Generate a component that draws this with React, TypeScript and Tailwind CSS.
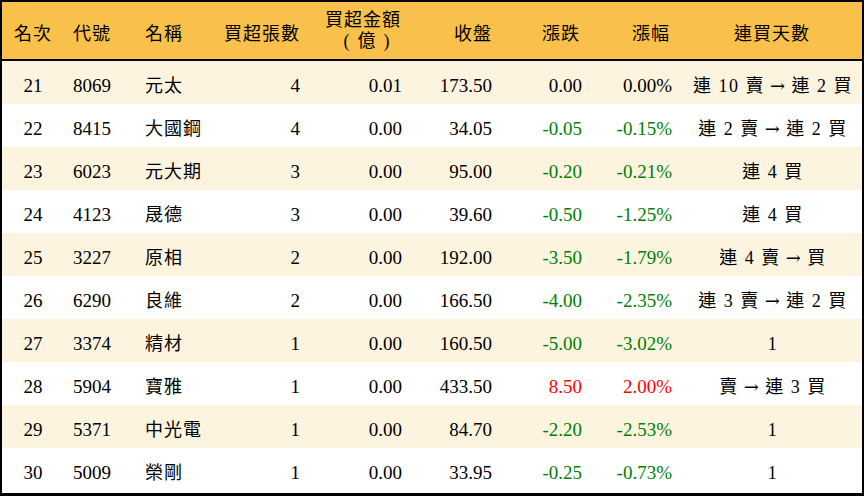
const rows = [
  { rank: 21, code: "8069", name: "元太", qty: 4, amt: "0.01", close: "173.50", chg: "0.00", pct: "0.00%", streak: ["連 10 賣", "連 2 買"], dir: 0 },
  { rank: 22, code: "8415", name: "大國鋼", qty: 4, amt: "0.00", close: "34.05", chg: "-0.05", pct: "-0.15%", streak: ["連 2 賣", "連 2 買"], dir: -1 },
  { rank: 23, code: "6023", name: "元大期", qty: 3, amt: "0.00", close: "95.00", chg: "-0.20", pct: "-0.21%", streak: ["連 4 買"], dir: -1 },
  { rank: 24, code: "4123", name: "晟德", qty: 3, amt: "0.00", close: "39.60", chg: "-0.50", pct: "-1.25%", streak: ["連 4 買"], dir: -1 },
  { rank: 25, code: "3227", name: "原相", qty: 2, amt: "0.00", close: "192.00", chg: "-3.50", pct: "-1.79%", streak: ["連 4 賣", "買"], dir: -1 },
  { rank: 26, code: "6290", name: "良維", qty: 2, amt: "0.00", close: "166.50", chg: "-4.00", pct: "-2.35%", streak: ["連 3 賣", "連 2 買"], dir: -1 },
  { rank: 27, code: "3374", name: "精材", qty: 1, amt: "0.00", close: "160.50", chg: "-5.00", pct: "-3.02%", streak: ["1"], dir: -1 },
  { rank: 28, code: "5904", name: "寶雅", qty: 1, amt: "0.00", close: "433.50", chg: "8.50", pct: "2.00%", streak: ["賣", "連 3 買"], dir: 1 },
  { rank: 29, code: "5371", name: "中光電", qty: 1, amt: "0.00", close: "84.70", chg: "-2.20", pct: "-2.53%", streak: ["1"], dir: -1 },
  { rank: 30, code: "5009", name: "榮剛", qty: 1, amt: "0.00", close: "33.95", chg: "-0.25", pct: "-0.73%", streak: ["1"], dir: -1 },
];

const cols = "grid grid-cols-[62px_71px_75px_100px_102px_90px_90px_90px_180px]";

const App = () => {
  return (
    <div
      className="w-[864px] h-[496px] bg-white text-black text-[19px] border-x-2 border-t-2 border-b-[3px] border-black flex flex-col overflow-hidden"
      style={{ fontFamily: '"Liberation Serif", "Noto Sans CJK TC", serif' }}
    >
      {/* Header */}
      <div className={`${cols} h-[59px] shrink-0 items-center pt-[7px] bg-[#f9c14c] border-b-2 border-black text-[18px] tracking-[1px]`}>
        <div className="text-center">名次</div>
        <div className="pl-[9px]">代號</div>
        <div className="pl-[10px]">名稱</div>
        <div className="text-right pr-[10px]">買超張數</div>
        <div className="flex justify-end pr-[11px] -mt-[6px]">
          <div className="flex flex-col items-center leading-[21px]">
            <div>買超金額</div>
            <div className="flex gap-[7px] pl-[8px]">
              <span>(</span>
              <span>億</span>
              <span>)</span>
            </div>
          </div>
        </div>
        <div className="text-right pr-[10px]">收盤</div>
        <div className="text-right pr-[12px]">漲跌</div>
        <div className="text-right pr-[12px]">漲幅</div>
        <div className="text-center">連買天數</div>
      </div>

      {/* Rows */}
      {rows.map((r, i) => {
        const tone = r.dir < 0 ? "text-[#008000]" : r.dir > 0 ? "text-[#ff0000]" : "text-black";
        return (
          <div
            key={r.rank}
            className={`${cols} h-[43px] shrink-0 items-center pt-[7px] ${i % 2 === 0 ? "bg-[#fdf4e0]" : "bg-white"}`}
          >
            <div className="text-center">{r.rank}</div>
            <div className="pl-[9px]">{r.code}</div>
            <div className="pl-[10px] text-[18px] tracking-[1px]">{r.name}</div>
            <div className="text-right pr-[10px]">{r.qty}</div>
            <div className="text-right pr-[10px]">{r.amt}</div>
            <div className="text-right pr-[10px]">{r.close}</div>
            <div className={`text-right pr-[10px] ${tone}`}>{r.chg}</div>
            <div className={`text-right pr-[10px] ${tone}`}>{r.pct}</div>
            <div className="text-center text-[18px] tracking-[1.5px] pl-[2px] whitespace-pre">
              {r.streak.map((s, j) => (
                <span key={j}>
                  {j > 0 && (
                    <span className="mx-[5px]" style={{ fontFamily: '"DejaVu Serif", serif' }}>
                      →
                    </span>
                  )}
                  {s}
                </span>
              ))}
            </div>
          </div>
        );
      })}
    </div>
  );
};

export default App;
